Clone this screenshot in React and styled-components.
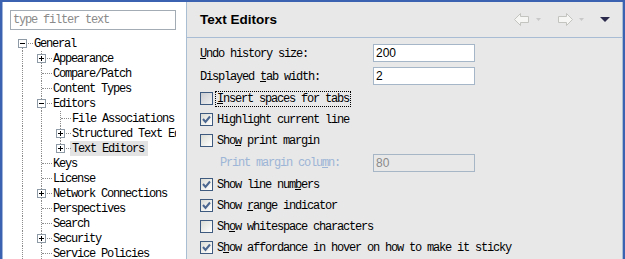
import React from 'react'
import styled, {createGlobalStyle} from 'styled-components'

const GlobalStyle = createGlobalStyle`
  html, body { margin: 0; padding: 0; background: #e8e8e8; }
  * { box-sizing: border-box; }
`

const mono = `"Liberation Mono", "DejaVu Sans Mono", monospace`

const treeData = [
  {label: 'General', toggle: '-', lines: ['first']},
  {label: 'Appearance', toggle: '+', lines: ['pipe', 'tee']},
  {label: 'Compare/Patch', lines: ['pipe', 'tee']},
  {label: 'Content Types', lines: ['pipe', 'tee']},
  {label: 'Editors', toggle: '-', lines: ['pipe', 'tee']},
  {label: 'File Associations', lines: ['pipe', 'pipe', 'tee']},
  {label: 'Structured Text Editors', toggle: '+', lines: ['pipe', 'pipe', 'tee']},
  {label: 'Text Editors', toggle: '+', lines: ['pipe', 'pipe', 'ell'], selected: true},
  {label: 'Keys', lines: ['pipe', 'tee']},
  {label: 'License', lines: ['pipe', 'tee']},
  {label: 'Network Connections', toggle: '+', lines: ['pipe', 'tee']},
  {label: 'Perspectives', lines: ['pipe', 'tee']},
  {label: 'Search', lines: ['pipe', 'tee']},
  {label: 'Security', toggle: '+', lines: ['pipe', 'tee']},
  {label: 'Service Policies', lines: ['pipe', 'tee']},
]

const checks = [
  {label: <><u>I</u>nsert spaces for tabs</>, checked: false, focus: true},
  {label: <>Highlight current line</>, checked: true},
  {label: <>Sho<u>w</u> print margin</>, checked: false},
  {field: true},
  {label: <>Show line num<u>b</u>ers</>, checked: true},
  {label: <>Show <u>r</u>ange indicator</>, checked: true},
  {label: <>Sh<u>o</u>w whitespace characters</>, checked: false},
  {label: <>S<u>h</u>ow affordance in hover on how to make it sticky</>, checked: true},
]

const Window = styled.div`
  width: 625px;
  height: 259px;
  display: flex;
  border-top: 2px solid #3b62b0;
  border-left: 2px solid #3b62b0;
  border-right: 2px solid #3b62b0;
  overflow: hidden;
  font-family: ${mono};
  font-size: 12px;
  letter-spacing: -1.2px;
  color: #000;
`

const LeftPane = styled.div`
  width: 185px;
  flex: none;
  background: #fff;
  border-left: 1px solid #9fb4d8;
  border-right: 1px solid #a9bdd3;
  padding: 8px 0 0 7px;
`

const Filter = styled.div`
  width: 166px;
  height: 20px;
  border: 1px solid #a3abb5;
  color: #8a8a8a;
  padding-left: 2px;
  line-height: 18px;
`

const Tree = styled.div`
  width: 166px;
  margin-top: 6px;
  padding-left: 3px;
  overflow: hidden;
`

const Row = styled.div`
  display: flex;
  height: 15px;
  white-space: nowrap;
`

const Cell = styled.div`
  position: relative;
  width: 19px;
  height: 15px;
  flex: none;

  &::before {
    content: '';
    position: absolute;
    left: 9px;
    top: ${p => (p.$kind === 'first' ? '7px' : '0')};
    bottom: ${p => (p.$kind === 'ell' ? '8px' : '0')};
    border-left: 1px dotted #8c8c8c;
  }

  &::after {
    content: '';
    display: ${p => (p.$kind === 'pipe' ? 'none' : 'block')};
    position: absolute;
    left: 10px;
    right: -1px;
    top: 7px;
    border-top: 1px dotted #8c8c8c;
  }
`

const Toggle = styled.span`
  position: absolute;
  z-index: 1;
  left: 5px;
  top: 3px;
  width: 9px;
  height: 9px;
  border: 1px solid #8f9aa7;
  background: #fff;

  &::before {
    content: '';
    position: absolute;
    left: 1px;
    top: 3px;
    width: 5px;
    height: 1px;
    background: #000;
  }

  &::after {
    content: '';
    display: ${p => (p.$open ? 'none' : 'block')};
    position: absolute;
    left: 3px;
    top: 1px;
    width: 1px;
    height: 5px;
    background: #000;
  }
`

const TreeLabel = styled.span`
  padding: 1px 4px 0 2px;
  line-height: 14px;
  background: ${p => (p.$selected ? '#e3e3e3' : 'transparent')};
`

const RightPane = styled.div`
  flex: 1;
  display: flex;
  flex-direction: column;
  background: #e8e8e8;
  border-right: 1px solid #a9bdd3;
`

const Header = styled.div`
  height: 36px;
  display: flex;
  align-items: center;
  padding: 0 12px 0 13px;
  border-bottom: 1px solid #a8bcd4;
`

const Title = styled.h1`
  flex: 1;
  margin: 0 0 1px;
  font-family: "Liberation Sans", Arial, sans-serif;
  font-size: 13.5px;
  font-weight: bold;
  letter-spacing: 0;
`

const Nav = styled.div`
  display: flex;
  align-items: center;
  gap: ${p => p.$gap || 0}px;
`

const Body = styled.div`
  padding: 6px 0 0 13px;
  display: flex;
  flex-direction: column;
`

const FieldRow = styled.div`
  display: flex;
  align-items: center;
  height: ${p => p.$h || 18}px;
  margin-bottom: ${p => p.$mb || 0}px;
  padding-left: ${p => p.$indent || 0}px;
`

const FieldLabel = styled.span`
  width: ${p => p.$w}px;
  padding-top: 1px;
  color: ${p => (p.$disabled ? '#9db5d6' : '#000')};
`

const Input = styled.div`
  width: 102px;
  height: 18px;
  border: 1px solid ${p => (p.$disabled ? '#a6b6c6' : '#a5b6c8')};
  background: ${p => (p.$disabled ? '#e8e8e8' : '#fff')};
  color: ${p => (p.$disabled ? '#8a8a8a' : '#000')};
  font-family: "Liberation Sans", Arial, sans-serif;
  font-size: 12px;
  letter-spacing: 0;
  line-height: 16px;
  padding-left: 2px;
`

const CheckRow = styled.div`
  display: flex;
  align-items: center;
  height: 21px;
  white-space: nowrap;
`

const Box = styled.span`
  width: 13px;
  height: 13px;
  flex: none;
  border: 1px solid #3e5a7e;
  background: ${p => (p.$hot
    ? 'linear-gradient(135deg, #c9ccd0, #f0f0f0)'
    : 'linear-gradient(135deg, #dcdcd6, #ffffff)')};
  display: flex;
  align-items: center;
  justify-content: center;
`

const CheckLabel = styled.span`
  margin-left: 2px;
  padding: 1px 1px 0;
  line-height: 13px;
  border: 1px dotted ${p => (p.$focus ? '#000' : 'transparent')};
`

const Arrow = ({flip}) => (
  <svg width="16" height="13" viewBox="0 0 16 13" style={{transform: flip ? 'scaleX(-1)' : 'none'}}>
    <polygon points="0.5,6.5 6.5,0.5 6.5,3.5 14.5,3.5 14.5,9.5 6.5,9.5 6.5,12.5"
      fill="#f6f6f4" stroke="#c3c3c0" />
  </svg>
)

const Drop = ({color = '#c8c8c8', w = 5, h = 3}) => (
  <svg width={w} height={h} viewBox={`0 0 ${w} ${h}`}>
    <polygon points={`0,0 ${w},0 ${w / 2},${h}`} fill={color} />
  </svg>
)

const Tick = () => (
  <svg width="9" height="9" viewBox="0 0 9 9">
    <polyline points="1,4 3.5,7 8,1.5" fill="none" stroke="#4c6891" strokeWidth="2" />
  </svg>
)

export default function App() {
  return (
    <>
      <GlobalStyle />
      <Window>
        <LeftPane>
          <Filter>type filter text</Filter>
          <Tree>
            {treeData.map((item, i) => (
              <Row key={i}>
                {item.lines.map((kind, j) => (
                  <Cell key={j} $kind={kind}>
                    {j === item.lines.length - 1 && item.toggle && <Toggle $open={item.toggle === '-'} />}
                  </Cell>
                ))}
                <TreeLabel $selected={item.selected}>{item.label}</TreeLabel>
              </Row>
            ))}
          </Tree>
        </LeftPane>

        <RightPane>
          <Header>
            <Title>Text Editors</Title>
            <Nav $gap={6}>
              <Arrow />
              <Drop />
              <span style={{width: 4}} />
              <Arrow flip />
              <Drop />
              <span style={{width: 4}} />
              <Drop color="#2b2a4c" w={10} h={5} />
            </Nav>
          </Header>
          <Body>
            <FieldRow $mb={5}>
              <FieldLabel $w={173}><u>U</u>ndo history size:</FieldLabel>
              <Input>200</Input>
            </FieldRow>
            <FieldRow $mb={3}>
              <FieldLabel $w={173}>Displayed <u>t</u>ab width:</FieldLabel>
              <Input>2</Input>
            </FieldRow>
            {checks.map((c, i) => c.field ? (
              <FieldRow key={i} $h={23} $indent={20}>
                <FieldLabel $w={153} $disabled>Print margin colu<u>m</u>n:</FieldLabel>
                <Input $disabled>80</Input>
              </FieldRow>
            ) : (
              <CheckRow key={i}>
                <Box $hot={c.focus}>{c.checked && <Tick />}</Box>
                <CheckLabel $focus={c.focus}>{c.label}</CheckLabel>
              </CheckRow>
            ))}
          </Body>
        </RightPane>
      </Window>
    </>
  )
}
